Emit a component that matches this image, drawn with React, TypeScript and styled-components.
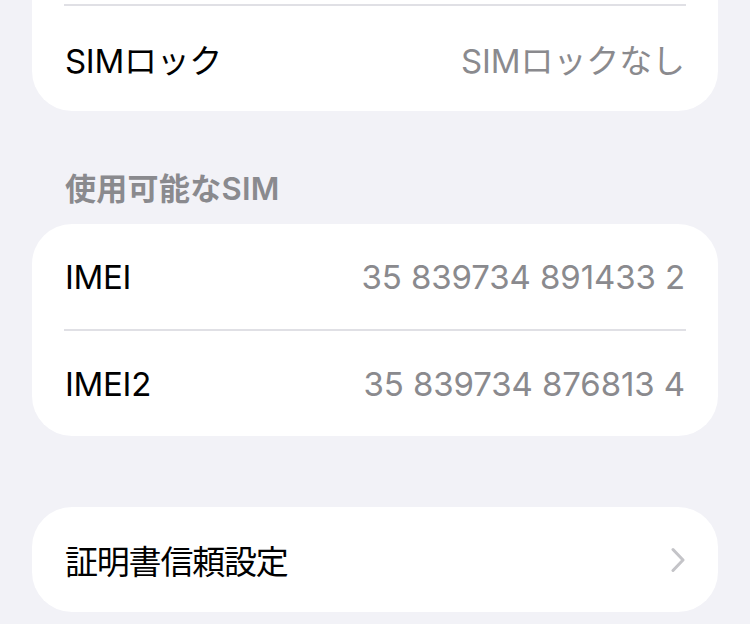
import React from 'react';
import styled, { createGlobalStyle } from 'styled-components';

const colors = {
    background: '#f2f2f7',
    card: '#ffffff',
    label: '#000000',
    secondary: '#8a8a8e',
    separator: '#e0e0e5',
    chevron: '#c4c4c8',
};

const FONT = `'Inter', 'Noto Sans CJK JP', sans-serif`;

const GlobalStyle = createGlobalStyle`
    html, body {
        margin: 0;
        padding: 0;
        background: ${colors.background};
    }
    body {
        font-family: ${FONT};
        -webkit-font-smoothing: antialiased;
    }
`;

interface IRow {
    label: string
    value?: string
    link?: boolean
}

const lockRows: IRow[] = [{ label: 'SIMロック', value: 'SIMロックなし' }];

const simRows: IRow[] = [
    { label: 'IMEI', value: '35 839734 891433 2' },
    { label: 'IMEI2', value: '35 839734 876813 4' },
];

const trustRows: IRow[] = [{ label: '証明書信頼設定', link: true }];

const Chevron = (): JSX.Element => (
    <svg width="14" height="26" viewBox="0 0 14 26" fill="none">
        <path d="M2 2.5L12 13L2 23.5" stroke={colors.chevron} strokeWidth="3" strokeLinecap="round" strokeLinejoin="round" />
    </svg>
);

const Group = ({ rows, continued }: { rows: IRow[], continued?: boolean }): JSX.Element => (
    <SCard $continued={continued}>
        {rows.map((row, i) => (
            <React.Fragment key={row.label}>
                {(i > 0 || continued) && <SDivider />}
                <SRow>
                    <SLabel $tight={row.link}>{row.label}</SLabel>
                    {row.value && <SValue>{row.value}</SValue>}
                    {row.link && <Chevron />}
                </SRow>
            </React.Fragment>
        ))}
    </SCard>
);

const App = (): JSX.Element => {
    return (
        <>
            <GlobalStyle />
            <SPage>
                <Group rows={lockRows} continued />
                <SSection>
                    <SHeader>使用可能なSIM</SHeader>
                    <Group rows={simRows} />
                </SSection>
                <Group rows={trustRows} />
            </SPage>
        </>
    );
};

const SPage = styled.div`
    display: flex;
    flex-direction: column;
    gap: 71px;
    padding: 0 32px;
    width: 750px;
    box-sizing: border-box;
`;

const SSection = styled.div`
    display: flex;
    flex-direction: column;
    margin-top: -12px;
`;

const SHeader = styled.div`
    font-size: 31px;
    font-weight: 600;
    color: ${colors.secondary};
    padding: 0 33px 16px;
    line-height: 38px;
    letter-spacing: 0.3px;
`;

const SCard = styled.div<{ $continued?: boolean }>`
    background: ${colors.card};
    border-radius: ${(p) => (p.$continued ? '0 0 40px 40px' : '40px')};
    padding-top: ${(p) => (p.$continued ? '4px' : '0')};
    overflow: hidden;
`;

const SDivider = styled.div`
    height: 2px;
    margin: 0 32px;
    background: ${colors.separator};
`;

const SRow = styled.div`
    display: flex;
    align-items: center;
    justify-content: space-between;
    height: 105px;
    padding: 0 33px;
    font-size: 33px;
`;

const SLabel = styled.span<{ $tight?: boolean }>`
    color: ${colors.label};
    letter-spacing: ${(p) => (p.$tight ? '-1.2px' : '-0.3px')};
`;

const SValue = styled.span`
    color: ${colors.secondary};
    letter-spacing: -0.1px;
`;

export default App;
